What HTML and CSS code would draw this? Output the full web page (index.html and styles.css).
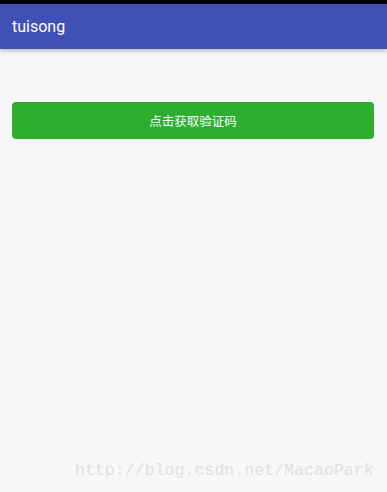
FILE: index.html
```html
<!DOCTYPE html>
<html>
<head>
<meta charset="utf-8">
<link rel="stylesheet" href="styles.css">
</head>
<body>
<div class="status"></div>
<header class="appbar"><span class="title">tuisong</span></header>
<main class="content">
  <button class="btn">点击获取验证码</button>
</main>
<div class="watermark">http://blog.csdn.net/MacaoPark</div>
</body>
</html>
```
FILE: styles.css
```css
html, body {
  margin: 0;
  padding: 0;
  height: 100%;
}
body {
  background: #f7f7f9;
  font-family: Roboto, "Noto Sans CJK SC", sans-serif;
  display: flex;
  flex-direction: column;
  position: relative;
  overflow: hidden;
}
.status {
  height: 4px;
  background: #000;
}
.appbar {
  height: 45px;
  background: #3f51b5;
  display: flex;
  align-items: center;
  padding-left: 12px;
  box-shadow: 0 2px 4px rgba(0,0,0,0.25);
  position: relative;
  z-index: 1;
}
.title {
  color: #fff;
  font-size: 16px;
  margin-top: -1px;
}
.content {
  padding: 53px 13px 0 12px;
}
.btn {
  display: block;
  width: 100%;
  height: 37px;
  border: none;
  border-radius: 4px;
  background: #2caf2e;
  color: #fff;
  font-family: "Noto Sans CJK SC", sans-serif;
  font-size: 12.5px;
  padding: 0;
}
.watermark {
  position: absolute;
  left: 75px;
  top: 461px;
  font-family: "Liberation Mono", "DejaVu Sans Mono", monospace;
  font-size: 16.6px;
  color: #e0e0e0;
  white-space: nowrap;
}
```
